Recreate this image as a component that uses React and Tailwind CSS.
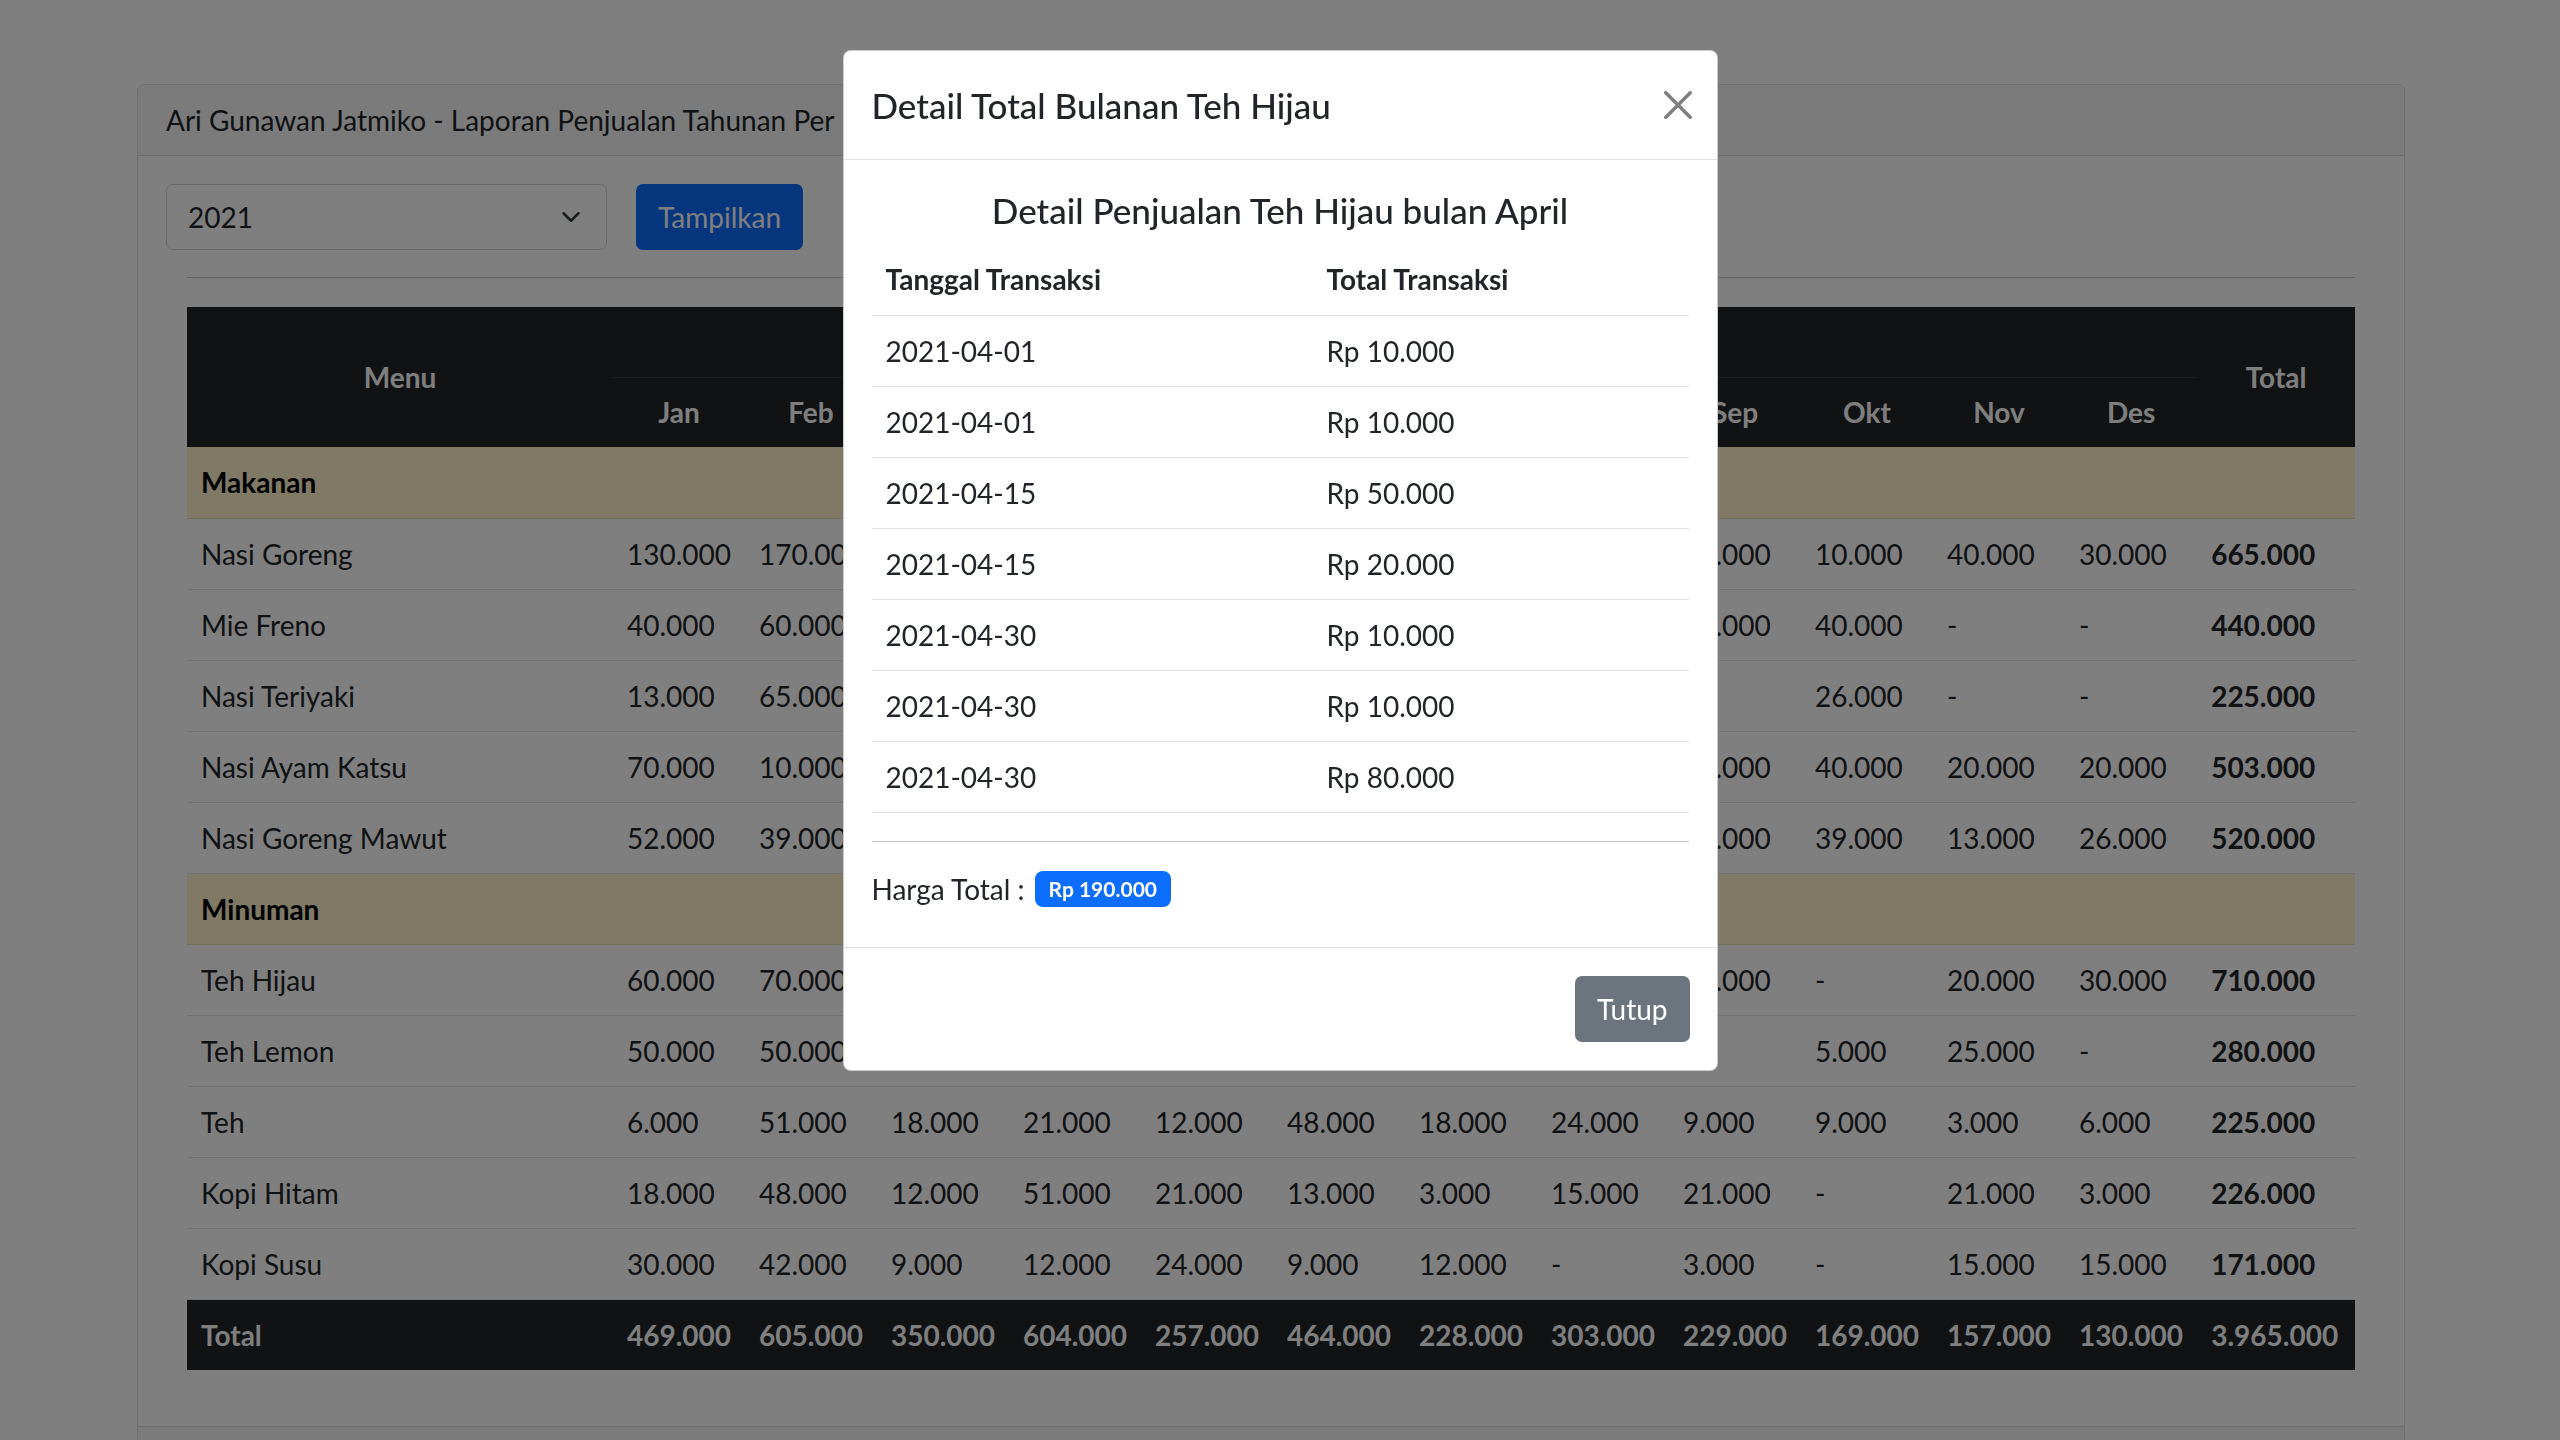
import React from "react";

const months = ["Jan", "Feb", "Mar", "Apr", "Mei", "Jun", "Jul", "Agu", "Sep", "Okt", "Nov", "Des"];

const makanan = [
  { name: "Nasi Goreng", values: [130, 170, 50, 45, 30, 60, 20, 40, 40, 10, 40, 30] },
  { name: "Mie Freno", values: [40, 60, 40, 70, 20, 80, 25, 35, 30, 40, 0, 0] },
  { name: "Nasi Teriyaki", values: [13, 65, 20, 25, 15, 36, 10, 15, 0, 26, 0, 0] },
  { name: "Nasi Ayam Katsu", values: [70, 10, 60, 80, 40, 60, 28, 30, 45, 40, 20, 20] },
  { name: "Nasi Goreng Mawut", values: [52, 39, 51, 70, 35, 58, 42, 54, 41, 39, 13, 26] },
];

const minuman = [
  { name: "Teh Hijau", values: [60, 70, 60, 190, 40, 70, 50, 80, 40, 0, 20, 30] },
  { name: "Teh Lemon", values: [50, 50, 30, 40, 20, 30, 20, 10, 0, 5, 25, 0] },
  { name: "Teh", values: [6, 51, 18, 21, 12, 48, 18, 24, 9, 9, 3, 6] },
  { name: "Kopi Hitam", values: [18, 48, 12, 51, 21, 13, 3, 15, 21, 0, 21, 3] },
  { name: "Kopi Susu", values: [30, 42, 9, 12, 24, 9, 12, 0, 3, 0, 15, 15] },
];

const transaksi = [
  ["2021-04-01", 10],
  ["2021-04-01", 10],
  ["2021-04-15", 50],
  ["2021-04-15", 20],
  ["2021-04-30", 10],
  ["2021-04-30", 10],
  ["2021-04-30", 80],
];

// 130 -> "130.000", 0 -> "-"
const fmt = (n) => (n ? String(n * 1000).replace(/\B(?=(\d{3})+(?!\d))/g, ".") : "-");
const sum = (arr) => arr.reduce((a, b) => a + b, 0);

function MenuRow({ item }) {
  return (
    <tr className="h-[71px] border-b border-[#dee2e6]">
      <td className="px-[14px]">{item.name}</td>
      {item.values.map((v, i) => (
        <td key={i} className="px-[14px]">{fmt(v)}</td>
      ))}
      <td className="px-[14px] font-bold">{fmt(sum(item.values))}</td>
    </tr>
  );
}

function CategoryRow({ label }) {
  return (
    <tr className="h-[71px] bg-[#fff3cd] border-b border-[#e6dbb9]">
      <td colSpan={14} className="px-[14px] font-bold text-black">{label}</td>
    </tr>
  );
}

function CloseIcon() {
  return (
    <svg viewBox="0 0 16 16" className="w-[28px] h-[28px] opacity-50" fill="#000">
      <path d="M.293.293a1 1 0 011.414 0L8 6.586 14.293.293a1 1 0 111.414 1.414L9.414 8l6.293 6.293a1 1 0 01-1.414 1.414L8 9.414l-6.293 6.293a1 1 0 01-1.414-1.414L6.586 8 .293 1.707a1 1 0 010-1.414z" />
    </svg>
  );
}

export default function App() {
  const all = [...makanan, ...minuman];
  const colTotals = months.map((_, i) => sum(all.map((r) => r.values[i])));
  const grand = sum(colTotals);
  const hargaTotal = sum(transaksi.map((t) => t[1]));

  return (
    <div className="relative h-screen overflow-hidden bg-white text-[#212529] text-[28px] leading-[42px] font-['Segoe_UI',Lato,'Noto_Sans',sans-serif]">
      {/* Page */}
      <div className="ml-[137px] w-[2268px] pt-[84px]">
        <div className="border border-black/[0.125] rounded-[7px]">
          <div className="h-[71px] flex items-center px-[28px] bg-black/[0.03] border-b border-black/[0.125] rounded-t-[7px]">
            Ari Gunawan Jatmiko - Laporan Penjualan Tahunan Per Menu
          </div>

          <div className="p-[28px]">
            <div className="flex items-center gap-[29px]">
              <div className="w-[441px] h-[66px] flex items-center justify-between pl-[21px] pr-[22px] border border-[#ced4da] rounded-[7px]">
                <span>2021</span>
                <svg viewBox="0 0 16 16" className="w-[26px] h-[20px]" fill="none" stroke="#343a40" strokeWidth="2" strokeLinecap="round" strokeLinejoin="round">
                  <path d="M2 5l6 6 6-6" />
                </svg>
              </div>
              <button className="h-[66px] px-[22px] bg-[#0d6efd] text-white rounded-[7px]">Tampilkan</button>
            </div>

            <div className="px-[21px]">
              <hr className="mt-[27px] border-t border-[#212529]/25" />

              <table className="mt-[29px] mb-[28px] w-full table-fixed border-collapse">
                <colgroup>
                  <col className="w-[426px]" />
                  {months.map((m) => (
                    <col key={m} className="w-[132px]" />
                  ))}
                  <col />
                </colgroup>
                <thead className="bg-[#212529] text-white font-bold">
                  <tr className="h-[70px]">
                    <th rowSpan={2} className="px-[14px] text-center align-middle">Menu</th>
                    <th colSpan={12} className="px-[14px] text-center border-b border-[#373b3e]">Bulan</th>
                    <th rowSpan={2} className="px-[14px] text-center align-middle">Total</th>
                  </tr>
                  <tr className="h-[70px]">
                    {months.map((m) => (
                      <th key={m} className="px-[14px] text-center">{m}</th>
                    ))}
                  </tr>
                </thead>
                <tbody>
                  <CategoryRow label="Makanan" />
                  {makanan.map((item) => (
                    <MenuRow key={item.name} item={item} />
                  ))}
                  <CategoryRow label="Minuman" />
                  {minuman.map((item) => (
                    <MenuRow key={item.name} item={item} />
                  ))}
                  <tr className="h-[71px] bg-[#212529] text-white font-bold">
                    <td className="px-[14px]">Total</td>
                    {colTotals.map((v, i) => (
                      <td key={i} className="px-[14px]">{fmt(v)}</td>
                    ))}
                    <td className="px-[14px]">{fmt(grand)}</td>
                  </tr>
                </tbody>
              </table>
            </div>
          </div>

          <div className="h-[71px] bg-black/[0.03] border-t border-black/[0.125]" />
        </div>
      </div>

      {/* Modal */}
      <div className="fixed inset-0 bg-black/50">
        <div className="mx-auto mt-[50px] w-[875px] bg-white border border-black/20 rounded-[8px]">
          <div className="flex items-center justify-between px-[28px] py-[28px] border-b border-[#dee2e6]">
            <h5 className="text-[35px] leading-[52px] font-medium">Detail Total Bulanan Teh Hijau</h5>
            <button className="-mr-[3px]">
              <CloseIcon />
            </button>
          </div>

          <div className="px-[28px] pt-[29px] pb-[37px]">
            <h5 className="text-center text-[35px] leading-[42px] font-medium mb-[13px]">
              Detail Penjualan Teh Hijau bulan April
            </h5>
            <table className="w-full border-collapse">
              <thead>
                <tr className="h-[71px] border-b border-[#dee2e6] font-bold">
                  <th className="w-[441px] px-[14px] text-left">Tanggal Transaksi</th>
                  <th className="px-[14px] text-left">Total Transaksi</th>
                </tr>
              </thead>
              <tbody>
                {transaksi.map(([tgl, total], i) => (
                  <tr key={i} className="h-[71px] border-b border-[#dee2e6]">
                    <td className="px-[14px]">{tgl}</td>
                    <td className="px-[14px]">Rp {fmt(total)}</td>
                  </tr>
                ))}
              </tbody>
            </table>
            <hr className="mt-[28px] border-t border-[#212529]/25" />
            <div className="mt-[26px] flex items-center gap-[10px]">
              <span>Harga Total :</span>
              <span className="inline-flex items-center h-[36px] px-[14px] rounded-[8px] bg-[#0d6efd] text-white text-[21px] leading-none font-bold">
                Rp {fmt(hargaTotal)}
              </span>
            </div>
          </div>

          <div className="flex justify-end px-[27px] py-[28px] border-t border-[#dee2e6]">
            <button className="h-[66px] px-[22px] bg-[#6c757d] text-white rounded-[7px]">Tutup</button>
          </div>
        </div>
      </div>
    </div>
  );
}
